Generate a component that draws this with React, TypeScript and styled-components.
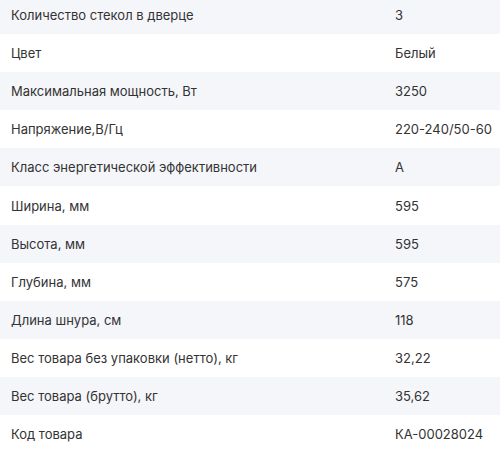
import React from 'react';
import styled, { createGlobalStyle } from 'styled-components';

const GlobalStyle = createGlobalStyle`
  html, body {
    margin: 0;
    padding: 0;
    background: #ffffff;
    overflow: hidden;
  }
  body {
    font-family: Inter, "Noto Sans", sans-serif;
  }
`;

interface SpecRow {
  name: string;
  value: string;
}

const specs: SpecRow[] = [
  { name: 'Количество стекол в дверце', value: '3' },
  { name: 'Цвет', value: 'Белый' },
  { name: 'Максимальная мощность, Вт', value: '3250' },
  { name: 'Напряжение,В/Гц', value: '220-240/50-60' },
  { name: 'Класс энергетической эффективности', value: 'A' },
  { name: 'Ширина, мм', value: '595' },
  { name: 'Высота, мм', value: '595' },
  { name: 'Глубина, мм', value: '575' },
  { name: 'Длина шнура, см', value: '118' },
  { name: 'Вес товара без упаковки (нетто), кг', value: '32,22' },
  { name: 'Вес товара (брутто), кг', value: '35,62' },
  { name: 'Код товара', value: 'КА-00028024' },
];

const App = () => {
  return (
    <React.Fragment>
      <GlobalStyle />
      <Table>
        {specs.map((row, i) => (
          <Row key={row.name} striped={i % 2 === 0}>
            <Name>{row.name}</Name>
            <Value>{row.value}</Value>
          </Row>
        ))}
      </Table>
    </React.Fragment>
  );
};

const Table = styled.div`
  width: 500px;
  margin-top: -4px;
  display: flex;
  flex-direction: column;
`;

const Row = styled.div<{ striped: boolean }>`
  height: 38.1px;
  display: grid;
  grid-template-columns: 384px 1fr;
  align-items: center;
  padding-left: 11px;
  background-color: ${({ striped }) => (striped ? '#f5f6fa' : '#ffffff')};
  color: #333333;
  font-size: 13px;
  box-sizing: border-box;
`;

const Name = styled.span`
  white-space: nowrap;
`;

const Value = styled.span`
  white-space: nowrap;
`;

export default App;
